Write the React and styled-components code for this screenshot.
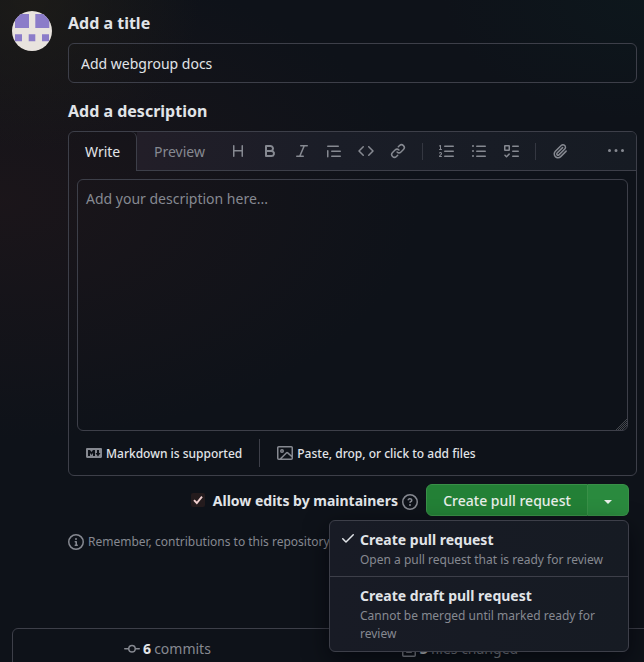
import React from "react";
import styled, { createGlobalStyle, css } from "styled-components";

const BORDER = "#3d3f49";
const MUTED = "#868991";
const TEXT = "#e1e4e8";

const GlobalStyle = createGlobalStyle`
  *, *::before, *::after { box-sizing: border-box; }
  html, body { margin: 0; padding: 0; background: #0e1219; }
  body {
    overflow: hidden;
    font-family: "Noto Sans", sans-serif;
    font-size: 14px;
    line-height: 20px;
    color: ${TEXT};
  }
  button, input, textarea { font: inherit; color: inherit; }
`;

const PATHS = {
  heading:
    "M3.75 2a.75.75 0 0 1 .75.75V7h7V2.75a.75.75 0 0 1 1.5 0v10.5a.75.75 0 0 1-1.5 0V8.5h-7v4.75a.75.75 0 0 1-1.5 0V2.75A.75.75 0 0 1 3.75 2Z",
  bold:
    "M4 2h4.5a3.501 3.501 0 0 1 2.852 5.53A3.499 3.499 0 0 1 9.5 14H4a1 1 0 0 1-1-1V3a1 1 0 0 1 1-1Zm1 7v3h4.5a1.5 1.5 0 0 0 0-3Zm3.5-2a1.5 1.5 0 0 0 0-3H5v3Z",
  italic:
    "M6 2.75A.75.75 0 0 1 6.75 2h6.5a.75.75 0 0 1 0 1.5h-2.505l-3.858 9H9.25a.75.75 0 0 1 0 1.5h-6.5a.75.75 0 0 1 0-1.5h2.505l3.858-9H6.75A.75.75 0 0 1 6 2.75Z",
  quote:
    "M1.75 2.5h10.5a.75.75 0 0 1 0 1.5H1.75a.75.75 0 0 1 0-1.5Zm4 5h8.5a.75.75 0 0 1 0 1.5h-8.5a.75.75 0 0 1 0-1.5Zm0 5h8.5a.75.75 0 0 1 0 1.5h-8.5a.75.75 0 0 1 0-1.5ZM2.5 7.75v6a.75.75 0 0 1-1.5 0v-6a.75.75 0 0 1 1.5 0Z",
  code:
    "m11.28 3.22 4.25 4.25a.75.75 0 0 1 0 1.06l-4.25 4.25a.749.749 0 0 1-1.275-.326.749.749 0 0 1 .215-.734L13.94 8l-3.72-3.72a.749.749 0 0 1 .326-1.275.749.749 0 0 1 .734.215Zm-6.56 0a.751.751 0 0 1 1.042.018.751.751 0 0 1 .018 1.042L2.06 8l3.72 3.72a.749.749 0 0 1-.326 1.275.749.749 0 0 1-.734-.215L.47 8.53a.75.75 0 0 1 0-1.06Z",
  link:
    "m7.775 3.275 1.25-1.25a3.5 3.5 0 1 1 4.95 4.95l-2.5 2.5a3.5 3.5 0 0 1-4.95 0 .751.751 0 0 1 .018-1.042.751.751 0 0 1 1.042-.018 1.998 1.998 0 0 0 2.83 0l2.5-2.5a2.002 2.002 0 0 0-2.83-2.83l-1.25 1.25a.751.751 0 0 1-1.042-.018.751.751 0 0 1-.018-1.042Zm-4.69 9.64a1.998 1.998 0 0 0 2.83 0l1.25-1.25a.751.751 0 0 1 1.042.018.751.751 0 0 1 .018 1.042l-1.25 1.25a3.5 3.5 0 1 1-4.95-4.95l2.5-2.5a3.5 3.5 0 0 1 4.95 0 .751.751 0 0 1-.018 1.042.751.751 0 0 1-1.042.018 1.998 1.998 0 0 0-2.83 0l-2.5 2.5a1.998 1.998 0 0 0 0 2.83Z",
  ordered:
    "M5 3.25a.75.75 0 0 1 .75-.75h8.5a.75.75 0 0 1 0 1.5h-8.5A.75.75 0 0 1 5 3.25Zm0 5a.75.75 0 0 1 .75-.75h8.5a.75.75 0 0 1 0 1.5h-8.5A.75.75 0 0 1 5 8.25Zm0 5a.75.75 0 0 1 .75-.75h8.5a.75.75 0 0 1 0 1.5h-8.5a.75.75 0 0 1-.75-.75ZM.924 10.32a.5.5 0 0 1-.851-.525l.001-.001.001-.002.002-.004.007-.011c.097-.144.215-.273.348-.384.228-.19.588-.392 1.068-.392.468 0 .858.181 1.126.484.259.294.377.673.377 1.038 0 .987-.686 1.495-1.156 1.845l-.047.035c-.303.225-.522.4-.654.597h1.357a.5.5 0 0 1 0 1H.5a.5.5 0 0 1-.5-.5c0-1.005.692-1.52 1.167-1.875l.035-.025c.531-.396.8-.625.8-1.078a.57.57 0 0 0-.128-.376C1.806 10.068 1.695 10 1.5 10a.658.658 0 0 0-.429.163.835.835 0 0 0-.144.153ZM2.003 2.5V6h.503a.5.5 0 0 1 0 1H.5a.5.5 0 0 1 0-1h.503V3.308l-.28.14a.5.5 0 0 1-.446-.895l1.003-.5a.5.5 0 0 1 .723.447Z",
  unordered:
    "M5.75 2.5h8.5a.75.75 0 0 1 0 1.5h-8.5a.75.75 0 0 1 0-1.5Zm0 5h8.5a.75.75 0 0 1 0 1.5h-8.5a.75.75 0 0 1 0-1.5Zm0 5h8.5a.75.75 0 0 1 0 1.5h-8.5a.75.75 0 0 1 0-1.5ZM2 14a1 1 0 1 1 0-2 1 1 0 0 1 0 2Zm1-6a1 1 0 1 1-2 0 1 1 0 0 1 2 0ZM2 4a1 1 0 1 1 0-2 1 1 0 0 1 0 2Z",
  tasklist:
    "M2 2h4a1 1 0 0 1 1 1v4a1 1 0 0 1-1 1H2a1 1 0 0 1-1-1V3a1 1 0 0 1 1-1Zm4.655 8.595a.75.75 0 0 1 0 1.06L4.03 14.28a.75.75 0 0 1-1.06 0l-1.5-1.5a.749.749 0 0 1 .326-1.275.749.749 0 0 1 .734.215l.97.97 2.095-2.095a.75.75 0 0 1 1.06 0ZM9.75 2.5h5.5a.75.75 0 0 1 0 1.5h-5.5a.75.75 0 0 1 0-1.5Zm0 5h5.5a.75.75 0 0 1 0 1.5h-5.5a.75.75 0 0 1 0-1.5Zm0 5h5.5a.75.75 0 0 1 0 1.5h-5.5a.75.75 0 0 1 0-1.5Zm-7.25-9v3h3v-3Z",
  paperclip:
    "M12.212 3.02a1.753 1.753 0 0 0-2.478.003l-5.83 5.83a3.007 3.007 0 0 0-.88 2.127c0 .795.315 1.551.88 2.116.567.567 1.333.89 2.126.89.79 0 1.548-.321 2.116-.89l5.48-5.48a.75.75 0 0 1 1.061 1.06l-5.48 5.48a4.492 4.492 0 0 1-3.177 1.33c-1.2 0-2.345-.487-3.187-1.33a4.483 4.483 0 0 1-1.32-3.177c0-1.195.475-2.341 1.32-3.186l5.83-5.83a3.25 3.25 0 0 1 5.553 2.297c0 .863-.343 1.691-.953 2.301L7.439 12.39c-.375.377-.884.59-1.416.593a1.998 1.998 0 0 1-1.412-.593 1.992 1.992 0 0 1 0-2.828l5.48-5.48a.751.751 0 0 1 1.042.018.751.751 0 0 1 .018 1.042l-5.48 5.48a.492.492 0 0 0 0 .707.499.499 0 0 0 .352.154.51.51 0 0 0 .356-.154l5.833-5.827a1.755 1.755 0 0 0 0-2.481Z",
  kebab:
    "M8 9a1.5 1.5 0 1 0 0-3 1.5 1.5 0 0 0 0 3ZM1.5 9a1.5 1.5 0 1 0 0-3 1.5 1.5 0 0 0 0 3Zm13 0a1.5 1.5 0 1 0 0-3 1.5 1.5 0 0 0 0 3Z",
  image:
    "M16 13.25A1.75 1.75 0 0 1 14.25 15H1.75A1.75 1.75 0 0 1 0 13.25V2.75C0 1.784.784 1 1.75 1h12.5c.966 0 1.75.784 1.75 1.75ZM1.75 2.5a.25.25 0 0 0-.25.25v10.5c0 .138.112.25.25.25h.94l.03-.03 6.077-6.078a1.75 1.75 0 0 1 2.412-.06L14.5 10.31V2.75a.25.25 0 0 0-.25-.25Zm12.5 11a.25.25 0 0 0 .25-.25v-.917l-4.298-3.889a.25.25 0 0 0-.344.009L4.81 13.5ZM7 6a2 2 0 1 1-3.999.001A2 2 0 0 1 7 6ZM5.5 6a.5.5 0 1 0-1 0 .5.5 0 0 0 1 0Z",
  question:
    "M0 8a8 8 0 1 1 16 0A8 8 0 0 1 0 8Zm8-6.5a6.5 6.5 0 1 0 0 13 6.5 6.5 0 0 0 0-13ZM6.92 6.085h.001a.749.749 0 1 1-1.342-.67c.169-.339.436-.701.849-.977C6.845 4.16 7.369 4 8 4a2.756 2.756 0 0 1 1.637.525c.503.377.863.965.863 1.725 0 .448-.115.83-.329 1.15-.205.307-.47.513-.692.662-.109.072-.22.138-.313.195l-.006.004a6.24 6.24 0 0 0-.26.16.952.952 0 0 0-.276.245.75.75 0 0 1-1.248-.832c.184-.264.42-.489.692-.661.103-.067.207-.132.313-.195l.007-.004c.1-.061.182-.11.258-.161a.969.969 0 0 0 .277-.245C8.96 6.514 9 6.427 9 6.25a.612.612 0 0 0-.262-.525A1.27 1.27 0 0 0 8 5.5c-.369 0-.595.09-.74.187a1.01 1.01 0 0 0-.34.398ZM9 11a1 1 0 1 1-2 0 1 1 0 0 1 2 0Z",
  info:
    "M0 8a8 8 0 1 1 16 0A8 8 0 0 1 0 8Zm8-6.5a6.5 6.5 0 1 0 0 13 6.5 6.5 0 0 0 0-13ZM6.5 7.75A.75.75 0 0 1 7.25 7h1a.75.75 0 0 1 .75.75v2.75h.25a.75.75 0 0 1 0 1.5h-2a.75.75 0 0 1 0-1.5h.25v-2h-.25a.75.75 0 0 1-.75-.75ZM8 6a1 1 0 1 1 0-2 1 1 0 0 1 0 2Z",
  commit:
    "M11.93 8.5a4.002 4.002 0 0 1-7.86 0H.75a.75.75 0 0 1 0-1.5h3.32a4.002 4.002 0 0 1 7.86 0h3.32a.75.75 0 0 1 0 1.5Zm-1.43-.75a2.5 2.5 0 1 0-5 0 2.5 2.5 0 0 0 5 0Z",
  check:
    "M13.78 4.22a.75.75 0 0 1 0 1.06l-7.25 7.25a.75.75 0 0 1-1.06 0L2.22 9.28a.751.751 0 0 1 .018-1.042.751.751 0 0 1 1.042-.018L6 10.94l6.72-6.72a.75.75 0 0 1 1.06 0Z",
  markdown:
    "M14.85 3c.63 0 1.15.52 1.14 1.15v7.7c0 .63-.51 1.15-1.15 1.15H1.15C.52 13 0 12.48 0 11.84V4.15C0 3.52.52 3 1.15 3ZM9 11V5H7L5.5 7 4 5H2v6h2V8l1.5 1.92L7 8v3Zm2.99.5L14.5 8H13V5h-2v3H9.5Z",
  fileDiff:
    "M1 1.75C1 .784 1.784 0 2.75 0h7.586c.464 0 .909.184 1.237.513l2.914 2.914c.329.328.513.773.513 1.237v9.586A1.75 1.75 0 0 1 13.25 16H2.75A1.75 1.75 0 0 1 1 14.25Zm1.75-.25a.25.25 0 0 0-.25.25v12.5c0 .138.112.25.25.25h10.5a.25.25 0 0 0 .25-.25V4.664a.25.25 0 0 0-.073-.177l-2.914-2.914a.25.25 0 0 0-.177-.073ZM8 3.25a.75.75 0 0 1 .75.75v1.5h1.5a.75.75 0 0 1 0 1.5h-1.5v1.5a.75.75 0 0 1-1.5 0V7h-1.5a.75.75 0 0 1 0-1.5h1.5V4A.75.75 0 0 1 8 3.25Zm-3 8a.75.75 0 0 1 .75-.75h4.5a.75.75 0 0 1 0 1.5h-4.5a.75.75 0 0 1-.75-.75Z",
};

const Svg = styled.svg`
  display: block;
  flex: none;
  fill: currentColor;
`;

const Icon = ({ name, size = 16, className }) => (
  <Svg className={className} width={size} height={size} viewBox="0 0 16 16" aria-hidden="true">
    <path d={PATHS[name]} />
  </Svg>
);

const Page = styled.main`
  width: 644px;
  height: 662px;
  overflow: hidden;
  display: flex;
  flex-direction: column;
  background:
    radial-gradient(ellipse 170px 150px at 30px 0px, rgba(31, 29, 24, 0.8), rgba(31, 29, 24, 0) 100%),
    radial-gradient(ellipse 420px 240px at 0px 200px, rgba(30, 22, 26, 0.8), rgba(30, 22, 26, 0) 100%),
    radial-gradient(ellipse 200px 120px at 644px 0px, rgba(13, 24, 29, 0.8), rgba(13, 24, 29, 0) 100%),
    #0e1219;
`;

const Compose = styled.section`
  display: grid;
  flex: none;
  grid-template-columns: 40px 569px;
  column-gap: 16px;
  padding: 11px 0 0 12px;
  height: 628px;
`;

const Avatar = styled.svg`
  display: block;
  width: 40px;
  height: 40px;
  border-radius: 50%;
`;

const Form = styled.form`
  display: flex;
  flex-direction: column;
`;

const Label = styled.h2`
  margin: 0;
  font-size: 16px;
  line-height: 24px;
  font-weight: 700;
`;

const TitleInput = styled.input`
  height: 40px;
  margin: 8px 0 16px;
  padding: 0 12px;
  border: 1px solid ${BORDER};
  border-radius: 6px;
  background: transparent;
  outline: none;
`;

const Editor = styled.div`
  display: flex;
  flex-direction: column;
  height: 345px;
  margin-top: 8px;
  border: 1px solid ${BORDER};
  border-radius: 6px;
`;

const TabBar = styled.div`
  display: flex;
  flex: none;
  height: 39px;
`;

const Tab = styled.button`
  border: 0;
  background: none;
  padding: 0 16px;
  ${(p) =>
    p.$active
      ? css`
          width: 68px;
          border-right: 1px solid ${BORDER};
          border-radius: 0 6px 0 0;
        `
      : css`
          width: 85px;
          padding-top: 2px;
          color: ${MUTED};
        `}
`;

const BarRest = styled.div`
  display: flex;
  flex: 1;
  align-items: center;
  color: ${MUTED};
  border-bottom: 1px solid ${BORDER};
  border-radius: 0 5px 0 0;
  background: linear-gradient(90deg, #221e28, #1a1d27 40%, #161b23);
`;

const Tool = styled.button`
  display: flex;
  align-items: center;
  justify-content: center;
  width: 32px;
  height: 32px;
  padding: 0;
  border: 0;
  background: none;
  color: inherit;
  margin-left: ${(p) => (p.$end ? "auto" : "0")};
  margin-right: ${(p) => (p.$end ? "4px" : "0")};
`;

const ToolDivider = styled.span`
  width: 1px;
  height: 17px;
  margin: 0 8px;
  background: #343741;
`;

const DescriptionField = styled.div`
  position: relative;
  flex: none;
  margin: 8px;
  height: 252px;
`;

const Description = styled.textarea`
  display: block;
  width: 100%;
  height: 100%;
  padding: 9px 8px;
  border: 1px solid ${BORDER};
  border-radius: 6px;
  background: transparent;
  outline: none;
  resize: none;
  &::placeholder { color: ${MUTED}; opacity: 1; }
`;

const Grip = styled.svg`
  position: absolute;
  right: 1px;
  bottom: 1px;
`;

const EditorFooter = styled.div`
  display: flex;
  align-items: center;
  height: 28px;
  padding-left: 17px;
  font-size: 12px;
  font-weight: 500;
`;

const FooterHint = styled.span`
  display: flex;
  align-items: center;
  gap: 4px;
  padding-top: 1px;
  svg { color: ${MUTED}; margin-top: -1px; }
`;

const FooterDivider = styled.span`
  width: 1px;
  height: 28px;
  margin: 0 17px;
  background: ${BORDER};
`;

const Actions = styled.div`
  display: flex;
  align-items: center;
  justify-content: flex-end;
  margin: 8px 8px 0 0;
  height: 32px;
`;

const CheckBox = styled.span`
  display: flex;
  align-items: center;
  justify-content: center;
  width: 14px;
  height: 14px;
  border-radius: 2px;
  background: #241b1d;
`;

const AllowLabel = styled.strong`
  margin: 2px 4px 0 8px;
  font-weight: 700;
`;

const Help = styled.span`
  color: ${MUTED};
  margin: 4px 8px 0 0;
`;

const SplitButton = styled.div`
  position: relative;
  display: flex;
  width: 203px;
  height: 32px;
`;

const PrimaryButton = styled.button`
  height: 32px;
  padding: 2px 0 0;
  border: 1px solid #399048;
  background: #238036;
  color: #e8eee9;
  font-weight: 500;
  ${(p) =>
    p.$caret
      ? css`
          display: flex;
          align-items: center;
          justify-content: center;
          width: 41px;
          border-left: 0;
          border-radius: 0 6px 6px 0;
          background: #2a8a3e;
        `
      : css`
          width: 162px;
          border-radius: 6px 0 0 6px;
        `}
`;

const Caret = styled.span`
  border: 4px solid transparent;
  border-top-color: #e8eee9;
  border-bottom: 0;
  margin-top: 1px;
`;

const Menu = styled.div`
  position: absolute;
  z-index: 2;
  top: 36px;
  right: 0;
  width: 300px;
  height: 132px;
  border: 1px solid ${BORDER};
  border-radius: 6px;
  background: linear-gradient(90deg, #181b25, #161b23);
  box-shadow: 0 8px 24px rgba(1, 4, 9, 0.6);
`;

const MenuItem = styled.div`
  display: grid;
  grid-template-columns: 15px 1fr;
  column-gap: 5px;
  padding: 9px 16px 7px 10px;
  border-bottom: ${(p) => (p.$last ? "0" : `1px solid ${BORDER}`)};
`;

const MenuTitle = styled.strong`
  display: block;
  font-weight: 700;
  line-height: 20px;
`;

const MenuText = styled.span`
  display: block;
  margin-top: 1px;
  font-size: 12px;
  line-height: 18px;
  color: ${MUTED};
`;

const Note = styled.p`
  display: flex;
  align-items: center;
  gap: 4px;
  margin: 17px 0 0;
  height: 18px;
  font-size: 12px;
  color: ${MUTED};
  white-space: nowrap;
`;

const Stats = styled.section`
  display: grid;
  grid-template-columns: 309px 275px;
  height: 60px;
  flex: none;
  margin-left: 12px;
  width: 660px;
  border: 1px solid ${BORDER};
  border-radius: 6px;
  color: ${MUTED};
`;

const Stat = styled.div`
  display: flex;
  justify-content: center;
  align-items: center;
  gap: 3px;
  height: 39px;
  b { color: ${TEXT}; font-weight: 700; }
`;

export default function App() {
  return (
    <>
      <GlobalStyle />
      <Page>
        <Compose>
          <Avatar viewBox="0 0 40 40">
            <rect width="40" height="40" fill="#e8e3de" />
            <path
              fill="#8b7cc9"
              d="M3 3h14v14H3ZM23.3 3h14v14h-14ZM3 23.3h7v7H3ZM16.7 23.3h6.6v7h-6.6ZM30 23.3h7v7h-7Z"
            />
          </Avatar>
          <Form onSubmit={(e) => e.preventDefault()}>
            <Label>Add a title</Label>
            <TitleInput defaultValue="Add webgroup docs" />
            <Label>Add a description</Label>
            <Editor>
              <TabBar>
                <Tab type="button" $active>Write</Tab>
                <BarRest>
                  <Tab type="button">Preview</Tab>
                  {["heading", "bold", "italic", "quote", "code", "link"].map((n) => (
                    <Tool type="button" key={n}><Icon name={n} /></Tool>
                  ))}
                  <ToolDivider />
                  {["ordered", "unordered", "tasklist"].map((n) => (
                    <Tool type="button" key={n}><Icon name={n} /></Tool>
                  ))}
                  <ToolDivider />
                  <Tool type="button"><Icon name="paperclip" /></Tool>
                  <Tool type="button" $end><Icon name="kebab" /></Tool>
                </BarRest>
              </TabBar>
              <DescriptionField>
                <Description placeholder="Add your description here..." />
                <Grip width="12" height="12" viewBox="0 0 12 12">
                  <path
                    d="M1 12 12 1M3 12 12 3M5 12 12 5M7 12 12 7"
                    fill="none"
                    stroke="#5c5e64"
                    strokeWidth="0.7"
                  />
                </Grip>
              </DescriptionField>
              <EditorFooter>
                <FooterHint><Icon name="markdown" />Markdown is supported</FooterHint>
                <FooterDivider />
                <FooterHint><Icon name="image" />Paste, drop, or click to add files</FooterHint>
              </EditorFooter>
            </Editor>
            <Actions>
              <CheckBox>
                <Svg width="10" height="10" viewBox="0 0 10 10">
                  <path d="M1 5.2 3.8 8 9 1.6" fill="none" stroke="#f0cfcf" strokeWidth="1.9" />
                </Svg>
              </CheckBox>
              <AllowLabel>Allow edits by maintainers</AllowLabel>
              <Help><Icon name="question" /></Help>
              <SplitButton>
                <PrimaryButton type="button">Create pull request</PrimaryButton>
                <PrimaryButton type="button" $caret aria-label="Select a type"><Caret /></PrimaryButton>
                <Menu>
                  <MenuItem>
                    <Icon name="check" />
                    <div>
                      <MenuTitle>Create pull request</MenuTitle>
                      <MenuText>Open a pull request that is ready for review</MenuText>
                    </div>
                  </MenuItem>
                  <MenuItem $last>
                    <span />
                    <div>
                      <MenuTitle>Create draft pull request</MenuTitle>
                      <MenuText>Cannot be merged until marked ready for review</MenuText>
                    </div>
                  </MenuItem>
                </Menu>
              </SplitButton>
            </Actions>
            <Note><Icon name="info" />Remember, contributions to this repository</Note>
          </Form>
        </Compose>
        <Stats>
          <Stat><Icon name="commit" /><b>6</b> commits</Stat>
          <Stat><Icon name="fileDiff" /><b>3</b> files changed</Stat>
        </Stats>
      </Page>
    </>
  );
}
